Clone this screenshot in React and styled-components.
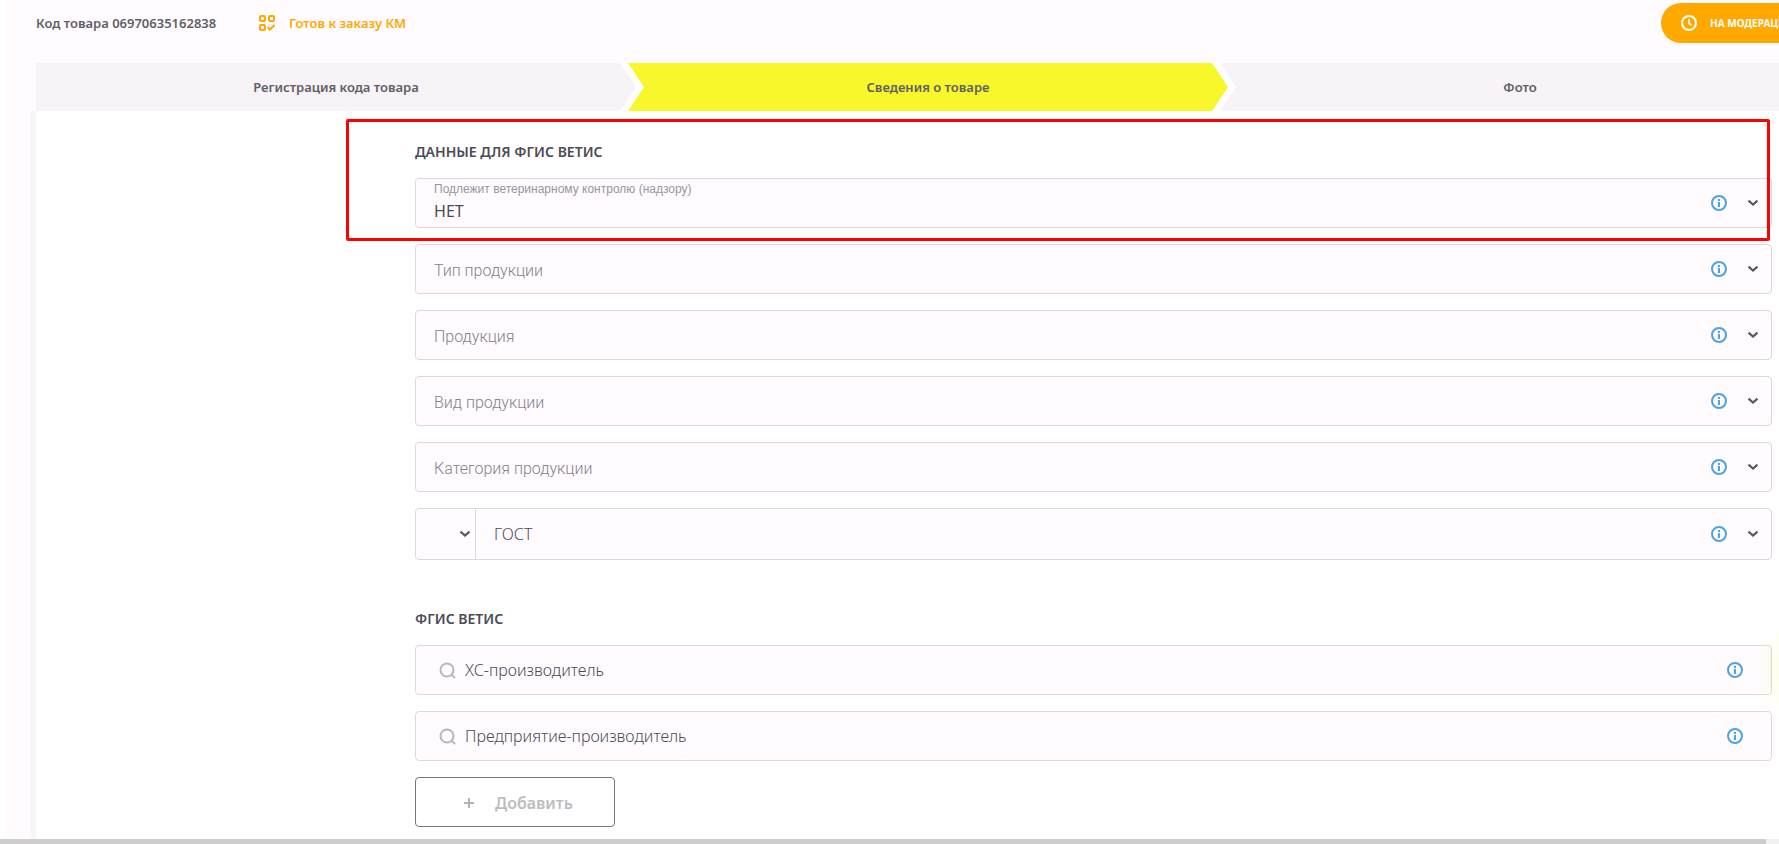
import React from "react";
import styled, { createGlobalStyle } from "styled-components";

const GlobalStyle = createGlobalStyle`
  *, *::before, *::after { box-sizing: border-box; }
  html, body, #root { height: 100%; }
  body { margin: 0; background: #ffffff; font-family: "Noto Sans", "Open Sans", sans-serif; color: #4c4b55; }
  button, select, input { font: inherit; color: inherit; }
`;

const Page = styled.div`
  display: flex;
  flex-direction: column;
  min-height: 100vh;
  overflow: hidden;
`;

const Body = styled.div`
  flex: 1;
  display: flex;
  flex-direction: column;
  margin-left: 6px;
  margin-right: -41px;
  background: #fffbff;
`;

const Header = styled.header`
  display: flex;
  align-items: center;
  height: 63px;
  padding: 0 0 17px 30px;
  font-size: 13px;
  font-weight: 600;
  color: #5f6066;
`;

const Code = styled.div`
  width: 223px;
`;

const Ready = styled.div`
  display: flex;
  align-items: center;
  gap: 14px;
  color: #ffa900;
`;

const StatusPill = styled.div`
  display: flex;
  align-items: center;
  gap: 13px;
  width: 159px;
  height: 40px;
  margin-left: auto;
  padding-left: 20px;
  border-radius: 20px;
  background: #ffa900;
  color: #ffffff;
  font-size: 10px;
  font-weight: 700;
  white-space: nowrap;
`;

const Steps = styled.nav`
  display: flex;
  margin-left: 30px;
  background: #ffffff;
`;

const Step = styled.a`
  flex: 1;
  display: flex;
  align-items: center;
  justify-content: center;
  height: 48px;
  margin-left: ${(p) => (p.$first ? "0" : "-8px")};
  background: ${(p) => (p.$active ? "#f8f72b" : "#f7f3f7")};
  color: #5f6066;
  font-size: 13px;
  font-weight: 600;
  text-decoration: none;
  clip-path: ${(p) =>
    p.$first
      ? "polygon(0 0, calc(100% - 16px) 0, 100% 50%, calc(100% - 16px) 100%, 0 100%)"
      : "polygon(0 0, calc(100% - 16px) 0, 100% 50%, calc(100% - 16px) 100%, 0 100%, 16px 50%)"};
`;

const Panel = styled.main`
  flex: 1;
  margin-left: 24px;
  padding: 8px 48px 12px 379px;
  border-left: 6px solid #f6f7f9;
  background: #ffffff;
`;

const Section = styled.section`
  position: relative;
  display: flex;
  flex-direction: column;
  gap: 16px;
  margin-bottom: ${(p) => (p.$last ? "0" : "49px")};
`;

const Heading = styled.h2`
  margin: 0;
  font-size: 14px;
  line-height: 20px;
  font-weight: 600;
`;

const Group = styled.div`
  position: relative;
  display: flex;
  flex-direction: column;
  gap: 16px;
  padding-top: 23px;
`;

const Highlight = styled.div`
  position: absolute;
  inset: 0 2px -13px -69px;
  border: 3px solid #ff0000;
  border-radius: 2px;
  pointer-events: none;
`;

const Field = styled.div`
  display: flex;
  align-items: center;
  height: ${(p) => (p.$tall ? "52px" : "50px")};
  border: 1px solid #dcd9de;
  border-radius: 4px;
  background: #fffbff;
`;

const Stack = styled.div`
  flex: 1;
  display: flex;
  flex-direction: column;
`;

const FloatLabel = styled.label`
  padding-left: 18px;
  font-family: "Liberation Sans", Arial, sans-serif;
  font-size: 12px;
  line-height: 16px;
  color: #98969c;
`;

const Select = styled.select`
  appearance: none;
  flex: 1;
  width: 100%;
  padding: ${(p) => (p.$empty ? "4px 0 0 18px" : "0 0 0 18px")};
  border: 0;
  background: none;
  outline: none;
  font-family: ${(p) => (p.$empty ? 'Roboto, "Liberation Sans", sans-serif' : "inherit")};
  font-size: 16px;
  font-weight: ${(p) => (p.$regular ? "400" : "300")};
  line-height: ${(p) => (p.$regular ? "28px" : "24px")};
  color: ${(p) => (p.$empty ? "#85838a" : "#4c4b55")};
`;

const KindSelect = styled.div`
  display: flex;
  align-items: center;
  width: 60px;
  height: 100%;
  padding-right: 4px;
  border-right: 1px solid #dcd9de;
`;

const SearchInput = styled.input`
  flex: 1;
  padding: 0 0 0 9px;
  border: 0;
  background: none;
  outline: none;
  font-size: 16px;
  font-weight: 300;
  line-height: 24px;
  &::placeholder { color: #4c4b55; opacity: 1; }
`;

const IconButton = styled.button`
  display: flex;
  padding: 0;
  border: 0;
  background: none;
  margin-right: ${(p) => (p.$edge ? "28px" : "20px")};
`;

const ChevronSlot = styled.span`
  display: flex;
  margin-right: 12px;
  pointer-events: none;
`;

const SearchSlot = styled.span`
  display: flex;
  padding-left: 23px;
`;

const AddButton = styled.button`
  display: flex;
  align-items: center;
  gap: 20px;
  width: 200px;
  height: 50px;
  padding: 2px 0 0 47px;
  border: 1px solid #77767b;
  border-radius: 4px;
  background: #ffffff;
  color: #bdbcbf;
  font-size: 16px;
  font-weight: 600;
`;

const Track = styled.div`
  height: 5px;
  padding-right: 13px;
  background: #f1f1f1;
`;

const Thumb = styled.div`
  height: 5px;
  background: #cdcdcd;
`;

const Bubble = styled.div`
  position: absolute;
  right: -74px;
  bottom: 114px;
  width: 88px;
  height: 88px;
  border-radius: 50%;
  background: radial-gradient(circle, #f8f72b22 0%, #f8f72b0c 60%, #f8f72b0a 100%);
  pointer-events: none;
`;

const InfoIcon = () => (
  <svg width="16" height="16" viewBox="0 0 16 16" fill="none" aria-hidden="true">
    <circle cx="8" cy="8" r="7" stroke="#4aa3e8" strokeWidth="2" />
    <path d="M8 7v5M8 4v2" stroke="#4aa3e8" strokeWidth="2" />
  </svg>
);

const Chevron = () => (
  <svg width="12" height="8" viewBox="0 0 12 8" fill="none" aria-hidden="true">
    <path d="M1.500 1.700L6 5.600l4.500-3.900" stroke="#5a5960" strokeWidth="2.200" />
  </svg>
);

const SearchIcon = () => (
  <svg width="17" height="17" viewBox="0 0 17 17" fill="none" aria-hidden="true">
    <circle cx="8" cy="8" r="6.500" stroke="#b8b7bb" strokeWidth="2" />
    <path d="M12 12L16 16" stroke="#b8b7bb" strokeWidth="2" />
  </svg>
);

const PlusIcon = () => (
  <svg width="12" height="12" viewBox="0 0 12 12" aria-hidden="true">
    <path d="M6 1v10M1 6h10" stroke="#b4b3b7" strokeWidth="2" />
  </svg>
);

const ReadyIcon = () => (
  <svg width="16" height="16" viewBox="0 0 16 16" fill="none" stroke="#ffa900" strokeWidth="2" aria-hidden="true">
    <rect x="1" y="1" width="5" height="5" rx="1" />
    <rect x="10" y="1" width="5" height="5" rx="1" />
    <rect x="1" y="10" width="5" height="5" rx="1" />
    <path d="M8.500 12L11 14.500L15.500 10" />
  </svg>
);

const ClockIcon = () => (
  <svg width="16" height="16" viewBox="0 0 16 16" fill="none" stroke="#ffffff" strokeWidth="2" aria-hidden="true">
    <circle cx="8" cy="8" r="7" />
    <path d="M8 4v4.500l2.500 1.500" strokeWidth="1.600" />
  </svg>
);

const Info = ({ edge }) => (
  <IconButton type="button" aria-label="Справка" $edge={edge}>
    <InfoIcon />
  </IconButton>
);

const emptyFields = ["Тип продукции", "Продукция", "Вид продукции", "Категория продукции"];
const searchFields = ["ХС-производитель", "Предприятие-производитель"];

export default function App() {
  return (
    <>
      <GlobalStyle />
      <Page>
        <Body>
          <Header>
            <Code>Код товара 06970635162838</Code>
            <Ready>
              <ReadyIcon />
              Готов к заказу КМ
            </Ready>
            <StatusPill>
              <ClockIcon />
              НА МОДЕРАЦИИ
            </StatusPill>
          </Header>
          <Steps>
            <Step href="#code" $first>Регистрация кода товара</Step>
            <Step href="#info" $active aria-current="step">Сведения о товаре</Step>
            <Step href="#photo">Фото</Step>
          </Steps>
          <Panel>
            <Section>
              <Group>
                <Heading>ДАННЫЕ ДЛЯ ФГИС ВЕТИС</Heading>
                <Field>
                  <Stack>
                    <FloatLabel htmlFor="control">Подлежит ветеринарному контролю (надзору)</FloatLabel>
                    <Select id="control" defaultValue="no" $regular>
                      <option value="no">НЕТ</option>
                    </Select>
                  </Stack>
                  <Info />
                  <ChevronSlot><Chevron /></ChevronSlot>
                </Field>
                <Highlight />
              </Group>
              {emptyFields.map((name) => (
                <Field key={name}>
                  <Select $empty aria-label={name} defaultValue="">
                    <option value="">{name}</option>
                  </Select>
                  <Info />
                  <ChevronSlot><Chevron /></ChevronSlot>
                </Field>
              ))}
              <Field $tall>
                <KindSelect>
                  <Select aria-label="Вид документа" />
                  <Chevron />
                </KindSelect>
                <Select aria-label="ГОСТ" defaultValue="gost">
                  <option value="gost">ГОСТ</option>
                </Select>
                <Info />
                <ChevronSlot><Chevron /></ChevronSlot>
              </Field>
            </Section>
            <Section $last>
              <Heading>ФГИС ВЕТИС</Heading>
              {searchFields.map((name) => (
                <Field key={name}>
                  <SearchSlot><SearchIcon /></SearchSlot>
                  <SearchInput type="text" aria-label={name} placeholder={name} />
                  <Info edge />
                </Field>
              ))}
              <AddButton type="button">
                <PlusIcon />
                Добавить
              </AddButton>
              <Bubble />
            </Section>
          </Panel>
        </Body>
        <Track>
          <Thumb />
        </Track>
      </Page>
    </>
  );
}
